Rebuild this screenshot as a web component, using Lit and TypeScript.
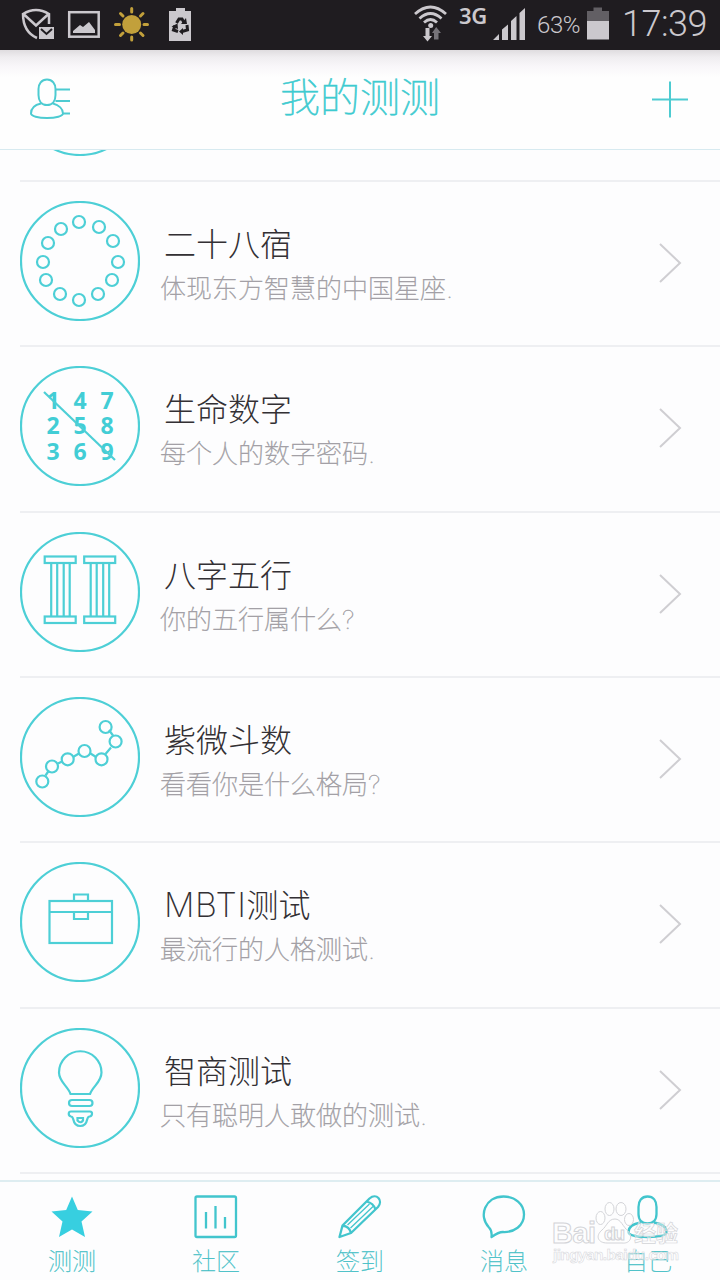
import { LitElement, html, css, svg } from "lit";
import { customElement, property } from "lit/decorators.js";

const ring = (cx: number, cy: number, r = 6) => svg`<circle cx=${cx} cy=${cy} r=${r} />`;

const mansions = svg`${[
  [79, 222], [99, 227], [113, 241], [118, 262], [112, 280], [98, 294], [79, 300],
  [60, 294], [46, 280], [43, 262], [48, 243], [61, 229],
].map(([x, y]) => ring(x - 20, y - 201))}`;

const digits = svg`
  <g class="digits">
    ${["147", "258", "369"].map((row, r) =>
      [...row].map((d, c) => svg`<text x=${33 + c * 27} y=${42.5 + r * 25.7}>${d}</text>`))}
  </g>
  <path d="M24 26 L95 94" />`;

const pillar = (x: number) => svg`
  <rect x=${x} y="24.500" width="31" height="6.500" />
  <rect x=${x} y="84.500" width="31" height="6.500" />
  <path d="M${x + 6.5} 31V84.500M${x + 12.5} 31V84.500M${x + 19} 31V84.500M${x + 25} 31V84.500" />`;

const pillars = svg`${pillar(24.7)}${pillar(64.2)}`;

const chain = svg`
  <path d="M25.500 78.500L29 73.500M38 66.500L42 64.500M53 60L59 56.500M70.500 56.500L76 60M85.500 57L91 50.500M93 38.500L89 33" />
  ${[[22.3, 84.5], [32, 69.5], [47.7, 62.3], [64.5, 54], [81.5, 62.3], [95.6, 44.5], [85.6, 30]].map(([x, y]) => ring(x, y))}`;

const briefcase = svg`
  <rect x="29.500" y="39" width="62.500" height="42" />
  <path d="M29.500 50H92M54 39V32.500H68V39M54 50V57H68V50" />`;

const bulb = svg`
  <path d="M50.500 66C48 58 39 54 39 44.500A21 21 0 0 1 81.500 44.500C81.500 54 73 58 70 66Z" />
  <rect x="49" y="72" width="23.500" height="6" rx="3" />
  <path d="M51 83.500H70C73 83.500 72.500 88 69.500 88.500C68 88.500 67.500 90 67 92C65.500 100 55 100 53.500 92C53 90 52.500 88.500 51 88.500C48 88 48 83.500 51 83.500Z" />
  <path d="M57.500 90H63V92.500Q60.300 96 57.500 92.500Z" />`;

interface Quiz { latin?: string; title: string; note: string; art: unknown }

const quizzes: Quiz[] = [
  { title: "二十八宿", note: "体现东方智慧的中国星座.", art: mansions },
  { title: "生命数字", note: "每个人的数字密码.", art: digits },
  { title: "八字五行", note: "你的五行属什么?", art: pillars },
  { title: "紫微斗数", note: "看看你是什么格局?", art: chain },
  { latin: "MBTI", title: "测试", note: "最流行的人格测试.", art: briefcase },
  { title: "智商测试", note: "只有聪明人敢做的测试.", art: bulb },
];

const tabs = [
  { label: "测测", art: svg`<path class="solid" d="M24 3.500L29.800 17L44.500 18.500L33.500 28.500L37 44L24 36.500L11 44L14.500 28.500L3.500 18.500L18.200 17Z" />` },
  { label: "社区", art: svg`<rect x="3.500" y="3.500" width="40.500" height="40.500" rx="1.500" /><path d="M14 19V35.500M23.500 13V35.500M33 24V35.500" />` },
  { label: "签到", art: svg`<path d="M3.500 44L6.500 32.500L33.500 5.500C40.500 -.500 47.500 7.500 42 14L15 40Z M6.500 32.500Q13.500 33.500 15 40M30.500 8.500Q37.500 10 39.500 16.500" /><path class="fine" d="M11.500 32L33.500 11M14.500 35L37 13.500" />` },
  { label: "消息", art: svg`<path d="M11.500 44C12 40 11.500 37 9 34.500C-2 23 5 3.500 23.500 3.500C35 3.500 44 11 44 21.500C44 33 34 39.500 23 39C19 39 15 41.500 11.500 44Z" />` },
  { label: "自己", art: svg`<path d="M23.500 3.500C29.500 3.500 32.500 8 32.500 14V21C32.500 27 29 30.500 23.500 30.500S14.500 27 14.500 21V14C14.500 8 17.500 3.500 23.500 3.500ZM17 29.500C8.500 31 4.500 34.500 4.500 39C4.500 42 11.500 44 23.500 44S42.500 42 42.500 39C42.500 34.500 38.500 31 30 29.500" />` },
];

@customElement("status-bar")
class StatusBar extends LitElement {
  static styles = css`
    :host { display: flex; height: 50px; background: #1f1c20; color: #cbc8cd; font-family: Roboto, sans-serif; }
    svg { display: block; height: 50px; flex: none; }
    .spacer { flex: 1; }
    .net { font: 600 22px/30px "Noto Sans", sans-serif; width: 34px; letter-spacing: -0.3px; }
    .pct { font-size: 24px; line-height: 51px; width: 50px; letter-spacing: -0.4px; }
    .time { font-size: 36px; font-weight: 300; line-height: 49px; width: 98px; letter-spacing: -0.5px; }
  `;
  render() {
    return html`
      <svg width="216" viewBox="0 0 216 50">
        <g fill="none" stroke="#cbc8cd" stroke-width="2.500">
          <path d="M37 38C28 34 23 26 23 14Q36 6 49 14V24M23.500 14L36 25.500L48.500 14" />
          <rect x="69.200" y="12.200" width="29.500" height="24.500" />
        </g>
        <path fill="#cbc8cd" d="M39 27H54V39H39Z M73 33L73 31L80 25L83 27L89 22L95 30V33Z M169 11H176V8H185V11H191V41H169Z" />
        <path d="M41 29L46.500 34L52 29" fill="none" stroke="#1f1c20" stroke-width="2" />
        <circle cx="131.700" cy="24.500" r="9.500" fill="#c2a03b" />
        <path stroke="#c2a03b" stroke-width="3" stroke-linecap="round" d="M131.700 8.500V12M131.700 37V40M115.500 24.500H119.500M144 24.500H147.500M120.500 13.500L123 16M140.500 33L143 35.500M120.500 35.500L123 33M140.500 16L143 13.500" />
        <g fill="none" stroke="#1f1c20" stroke-width="3">
          <path d="M176.500 23L179 19H182L184 22.500M187 25L187.500 30L182 31.500M178 31.500L173.500 30L175 25.500" />
        </g>
        <path fill="#1f1c20" d="M181 24L187 24L186 18Z M183 28V35L179 31.500Z M171.500 26.500L177.500 23.500L178 29Z" />
      </svg>
      <div class="spacer"></div>
      <svg width="49" viewBox="410 0 49 50">
        <g fill="none" stroke="#cbc8cd" stroke-width="2.800">
          <path d="M415 14Q430.500 0 446 14M419.500 18.500Q430.500 8.500 441.500 18.500M424 22.500Q430.500 16.500 437 22.500" />
        </g>
        <circle cx="430.700" cy="25.500" r="2.500" fill="#cbc8cd" />
        <path fill="#cbc8cd" d="M425.500 28H429.500V36H432L427.500 41.500L423 36H425.500Z" />
        <path fill="#77747a" d="M434 39.500H438.500V33H441L436.200 27L432 33H434Z" />
      </svg>
      <div class="net">3G</div>
      <svg width="44" viewBox="493 0 44 50">
        <path fill="#cbc8cd" d="M493 40L499 34V40Z M502 40V29.500L508 24.500V40Z M511 40V21L516.500 16V40Z M519.500 40V13L525 8V40Z" />
      </svg>
      <div class="pct">63%</div>
      <svg width="35" viewBox="587 0 35 50">
        <path fill="#625f64" d="M587 11H593.500V7.500H602V11H609V22H587Z" />
        <path fill="#cbc8cd" d="M587 21H609V39.500H587Z" />
      </svg>
      <div class="time">17:39</div>`;
  }
}

@customElement("quiz-row")
class QuizRow extends LitElement {
  @property({ attribute: false }) quiz!: Quiz;
  static styles = css`
    :host { display: flex; box-sizing: border-box; height: 165.35px; margin-left: 20px; padding-top: 19px; border-bottom: 2px solid #eeeff2; }
    .badge { display: block; width: 120px; height: 120px; flex: none; fill: none; stroke: #4dcfd6; stroke-width: 2.2; }
    .digits { fill: #42cdd5; stroke: none; font: 700 23px "Open Sans", sans-serif; text-anchor: middle; }
    .copy { flex: 1; padding: 21px 0 0 20px; white-space: nowrap; }
    .title { height: 46px; padding-left: 4px; font-size: 32px; line-height: 46px; color: #333034; font-weight: 300; }
    .latin { font: 200 34px/1 Inter, sans-serif; letter-spacing: 0.5px; }
    .note { height: 42px; font-family: Inter, "Noto Sans CJK SC", sans-serif; font-size: 26px; line-height: 42px; color: #a19ea4; font-weight: 100; -webkit-text-stroke: 0.4px #a19ea4; }
    .arrow { width: 24px; height: 44px; margin: 39px 38px 0 0; fill: none; stroke: #cfced2; stroke-width: 2; }
  `;
  render() {
    const { latin, title, note, art } = this.quiz;
    return html`
      <svg class="badge" viewBox="0 0 120 120"><circle cx="60" cy="60" r="59" />${art}</svg>
      <div class="copy">
        <div class="title">${latin ? html`<span class="latin">${latin}</span>` : ""}${title}</div>
        <div class="note">${note}</div>
      </div>
      <svg class="arrow" viewBox="0 0 24 44"><path d="M2 4L22 23L2 42" /></svg>`;
  }
}

@customElement("app-root")
class AppRoot extends LitElement {
  static styles = css`
    :host { display: flex; flex-direction: column; position: relative; width: 720px; height: 1280px; overflow: hidden; background: #fdfdfe; font-family: Roboto, "Noto Sans CJK SC", sans-serif; font-weight: 300; }
    status-bar { flex: none; }
    header { display: flex; align-items: center; box-sizing: border-box; height: 100px; flex: none; padding: 0 30px 2px; border-bottom: 1px solid #d7eaf0; background: linear-gradient(#dfdcdf 0, #efedf0 7px, #f8f6f9 16px, #fefefe 27px); }
    header svg { width: 42px; height: 42px; fill: none; stroke: #4dcbd1; stroke-width: 2; }
    h1 { flex: 1; margin: 0; text-align: center; font-size: 40px; line-height: 58px; font-weight: 100; color: #3ecbd0; -webkit-text-stroke: 0.6px #3ecbd0; }
    main { flex: 1; min-height: 0; overflow: hidden; }
    .partial { display: flex; align-items: flex-end; box-sizing: border-box; height: 32px; margin-left: 20px; padding-bottom: 24px; border-bottom: 2px solid #eeeff2; overflow: hidden; }
    .partial svg { width: 120px; height: 120px; flex: none; fill: none; stroke: #4dcfd6; stroke-width: 2.2; }
    nav { display: grid; grid-template-columns: repeat(5, 1fr); box-sizing: border-box; height: 100px; flex: none; border-top: 2px solid #deedf1; }
    .tab { display: flex; flex-direction: column; align-items: center; padding-top: 11px; font-size: 24px; line-height: 34px; color: #43bfc6; font-weight: 100; -webkit-text-stroke: 0.25px #43bfc6; }
    .tab svg { width: 48px; height: 48px; margin-bottom: 4px; fill: none; stroke: #42c5cd; stroke-width: 2.3; stroke-linejoin: round; }
    .tab .solid { fill: #37cfe0; stroke: none; }
    .tab .fine { stroke-width: 1.3; }
    .watermark { position: absolute; left: 545px; top: 1195px; width: 145px; height: 75px; fill: #ffffff70; stroke: #d3d4d8; stroke-width: 1; }
    .brand { font: 700 29px "Liberation Sans", "Noto Sans CJK SC", sans-serif; }
    .du { font-size: 19px; }
    .jy { font-size: 22px; stroke-width: 0.7; }
    .site { font: 700 15.500px "Liberation Sans", sans-serif; stroke-width: 0.5; }
  `;
  render() {
    return html`
      <status-bar></status-bar>
      <header>
        <svg viewBox="30 78 42 42">
          <path d="M47 79.500C52.500 79.500 55.500 84 55.500 89V95C55.500 101 52.500 105 47 105S38.500 101 38.500 95V89C38.500 84 41.500 79.500 47 79.500ZM41 103.500C34 105 31 109 31 113.500C31 116 38 118 47 118S63 116 63 113.500C63 109 59 105 53 103.500M55.500 89.500H70M55.500 101H70M63 113.500H70" />
        </svg>
        <h1>我的测测</h1>
        <svg viewBox="0 0 42 42"><path d="M4 21.500H40M22 3.500V39.500" /></svg>
      </header>
      <main>
        <div class="partial"><svg viewBox="0 0 120 120"><circle cx="60" cy="60" r="59" /></svg></div>
        ${quizzes.map((q) => html`<quiz-row .quiz=${q}></quiz-row>`)}
      </main>
      <nav>
        ${tabs.map((t) => html`<div class="tab"><svg viewBox="0 0 48 48">${t.art}</svg><span>${t.label}</span></div>`)}
      </nav>
      <svg class="watermark" viewBox="545 1195 145 75">
        <text class="brand" x="552" y="1243" textLength="44">Bai</text>
        <ellipse cx="600.500" cy="1218" rx="4.500" ry="6.500" />
        <ellipse cx="609.500" cy="1209" rx="4.500" ry="6.500" />
        <ellipse cx="621" cy="1209" rx="5" ry="6.500" />
        <ellipse cx="629" cy="1219.500" rx="4.500" ry="6" />
        <path d="M615 1219C621 1219 623 1227 628 1231C634 1238 629 1244 622 1243H607C598 1243 595 1236 602 1230C607 1226 608 1219 615 1219Z" />
        <text class="brand du" x="604" y="1240" textLength="21">du</text>
        <text class="brand jy" x="634" y="1241" textLength="44">经验</text>
        <text class="site" x="553" y="1260" textLength="126">jingyan.baidu.com</text>
      </svg>`;
  }
}
